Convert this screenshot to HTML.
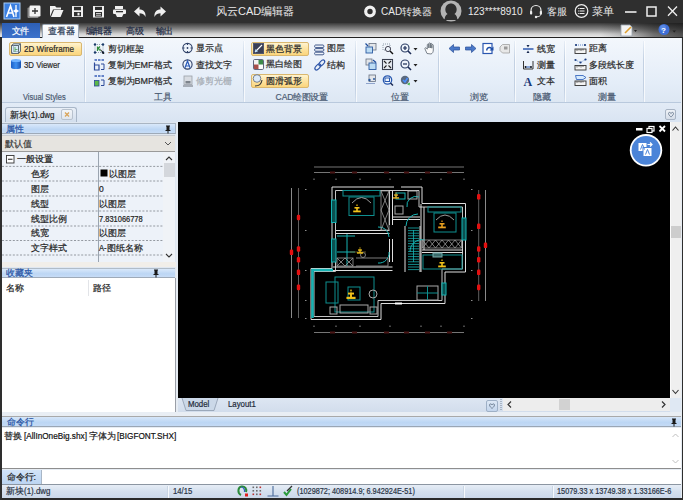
<!DOCTYPE html>
<html><head><meta charset="utf-8">
<style>
*{box-sizing:border-box;margin:0;padding:0}
html,body{width:683px;height:500px;overflow:hidden;background:#2e2e2e;font-family:"Liberation Sans",sans-serif;font-size:11px;color:#222}
.a{position:absolute}
#title{left:0;top:0;width:683px;height:23px;background:#2f2f2f;color:#e6e6e6}
#tabrow{left:0;top:23px;width:683px;height:14px;background:linear-gradient(#3a3a3a,#8a8a8a 45%,#d2d2d2 78%,#e8e8e8)}
#tabline{left:0;top:37px;width:683px;height:1.2px;background:#222}
#ribbon{left:2px;top:38px;width:679px;height:65px;background:linear-gradient(#f3f7fc,#e4edf8 70%,#dde7f3);border-bottom:1px solid #b9c9dd}
#docstrip{left:2px;top:103px;width:679px;height:19px;background:linear-gradient(#e2ebf6,#d3e0f0)}
#leftpanel{left:2px;top:122px;width:174px;height:291px;background:#d8e3f0}
#canvas{left:178px;top:122px;width:492px;height:276px;background:#000}
#vscroll{left:670px;top:122px;width:11px;height:276px;background:#eaeef3}
#hstrip{left:178px;top:398px;width:503px;height:14px;background:linear-gradient(#dde7f3,#cfdcee)}
#cmdhdr{left:2px;top:416px;width:679px;height:11px;background:linear-gradient(#d2e2f6,#b8d1f0)}
#cmdarea{left:2px;top:427px;width:679px;height:42px;background:#fff}
#cmdrow{left:2px;top:469px;width:679px;height:15px;background:#fff;border-top:1px solid #8a8a8a}
#status{left:2px;top:484px;width:679px;height:14px;background:linear-gradient(#e3ecf7,#c9d9ee)}
.c{display:inline-block;width:1em;text-align:center}
.t{white-space:nowrap;-webkit-text-stroke:0.2px currentColor}
.hl{background:linear-gradient(#fff3cf,#fde3a0 50%,#fbd57c);border:1px solid #d9b76f;border-radius:2px}
</style></head><body>
<div id="title" class="a">
<svg class="a" style="left:0;top:0" width="683" height="23" viewBox="0 0 683 23">
 <rect x="4" y="3" width="16" height="16" fill="#3b7fe0" stroke="#a8cdf8" stroke-width="1"/>
 <path d="M6.5 17 L10.5 6 L14 17 M8 13 H13" stroke="#fff" stroke-width="1.6" fill="none"/>
 <path d="M16 5 V17 M13.5 11 H18.5" stroke="#fff" stroke-width="1.3" fill="none"/>
 <circle cx="16" cy="11" r="1.8" fill="#fff"/>
 <rect x="27.5" y="7.5" width="11" height="10.5" rx="1" fill="#8a8a8a"/>
 <rect x="29.5" y="5.5" width="11" height="11" rx="1.2" fill="#f2f2f2"/>
 <path d="M35 8 V14 M32 11 H38" stroke="#333" stroke-width="1.3"/>
 <path d="M50 6 H55 L56.5 7.5 H61 V9.5 H53 L50 16.5 Z" fill="#f0f0f0"/>
 <path d="M51 17 L54 10 H63.5 L60.5 17 Z" fill="#f0f0f0"/>
 <rect x="72" y="6" width="11" height="11" fill="#f0f0f0"/>
 <rect x="74" y="6.8" width="7" height="3.5" fill="#2f2f2f"/>
 <rect x="74" y="12" width="7" height="4.2" fill="#2f2f2f"/>
 <rect x="77.5" y="12.8" width="2" height="2.6" fill="#f0f0f0"/>
 <rect x="93" y="6" width="11" height="11.5" fill="#f0f0f0"/>
 <rect x="95" y="6.8" width="7" height="3.2" fill="#2f2f2f"/>
 <rect x="95" y="12" width="7" height="4.6" fill="#2f2f2f"/>
 <path d="M96 13.5 H101 M96 15.2 H101" stroke="#f0f0f0" stroke-width="0.8"/>
 <rect x="115" y="6" width="8" height="3" fill="#f0f0f0"/>
 <rect x="113" y="9.5" width="13" height="4.5" rx="1" fill="#f0f0f0"/>
 <path d="M115.5 14 H123.5 L122 17 H117 Z" fill="#f0f0f0"/>
 <rect x="116" y="11" width="7" height="1.3" fill="#2f2f2f"/>
 <path d="M134 11.5 L139.5 6.5 V9.5 C143.5 9.5 146 12 145.5 17 C144 14 142 13.3 139.5 13.3 V16.5 Z" fill="#f0f0f0"/>
 <path d="M166 11.5 L160.5 6.5 V9.5 C156.5 9.5 154 12 154.5 17 C156 14 158 13.3 160.5 13.3 V16.5 Z" fill="#f0f0f0"/>
 <circle cx="370" cy="11.5" r="4.3" fill="none" stroke="#f0f0f0" stroke-width="3.2"/>
 <circle cx="451" cy="11" r="10.5" fill="#b4b4b4"/>
 <path d="M444.5 20 C445 16 446 15 447.5 14 C445.5 12.5 445 10 445.5 8 C446.5 4.5 449 3.5 451 3.5 C453 3.5 455.5 4.5 456.5 8 C457 10 456.5 12.5 454.5 14 C456 15 457 16 457.5 20 Z" fill="#2f2f2f"/>
 <path d="M531 13 V10.5 C531 7.5 533.3 5.5 536 5.5 C538.7 5.5 541 7.5 541 10.5 V13" fill="none" stroke="#eee" stroke-width="1.2"/>
 <rect x="530" y="11" width="2.2" height="3.5" rx="0.8" fill="#eee"/>
 <rect x="539.8" y="11" width="2.2" height="3.5" rx="0.8" fill="#eee"/>
 <path d="M541 14 C540.5 16 539 16.8 536.5 16.8" fill="none" stroke="#eee" stroke-width="1"/>
 <circle cx="536" cy="17" r="1.2" fill="#eee"/>
 <circle cx="581.5" cy="11" r="6.3" fill="none" stroke="#eee" stroke-width="1.2"/>
 <path d="M579.5 8.5 H584.5 M579.5 11 H584.5 M579.5 13.5 H584.5" stroke="#eee" stroke-width="1"/>
 <path d="M578 8.5 H578.8 M578 11 H578.8 M578 13.5 H578.8" stroke="#eee" stroke-width="1"/>
 <path d="M625 12 H636.5" stroke="#eee" stroke-width="1.6"/>
 <rect x="647" y="7" width="9" height="9" fill="none" stroke="#eee" stroke-width="1.5"/>
 <path d="M668 6.5 L677 15.8 M677 6.5 L668 15.8" stroke="#eee" stroke-width="1.3"/>
</svg>
<div class="a" style="left:216px;top:4px;font-size:11px;line-height:15px;white-space:nowrap;color:#eaeaea"><span class="c">风</span><span class="c">云</span>CAD<span class="c">编</span><span class="c">辑</span><span class="c">器</span></div>
<div class="a" style="left:381px;top:4px;font-size:10px;line-height:15px;white-space:nowrap;color:#eaeaea">CAD<span class="c">转</span><span class="c">换</span><span class="c">器</span></div>
<div class="a" style="left:468px;top:4px;font-size:10px;line-height:15px;white-space:nowrap;color:#eaeaea">123****8910</div>
<div class="a" style="left:547px;top:4px;font-size:10px;line-height:15px;white-space:nowrap;color:#eaeaea"><span class="c">客</span><span class="c">服</span></div>
<div class="a" style="left:592px;top:4px;font-size:10.5px;line-height:15px;white-space:nowrap;color:#eaeaea"><span class="c">菜</span><span class="c">单</span></div>
</div>
<div id="contentbg" class="a" style="left:2px;top:38px;width:679.5px;height:460px;background:#e6ecf3"></div>
<!--RIBBON-->
<div id="tabrow" class="a"></div>
<div class="a" style="left:600px;top:23px;width:83px;height:14px;background:linear-gradient(to right,rgba(25,25,25,0),rgba(25,25,25,0.25) 40%,rgba(25,25,25,0.55) 65%,rgba(20,20,20,0.7))"></div>
<div id="tabline" class="a"></div>
<div class="a" style="left:2px;top:23px;width:38px;height:15px;background:linear-gradient(#2d5fb5,#3c72cc);"></div>
<div class="a" style="left:42px;top:24px;width:37px;height:15px;background:linear-gradient(#fdfdfd,#eef3fa);border:1px solid #9aa6b4;border-bottom:none;border-radius:2px 2px 0 0"></div>
<div class="a t" style="left:11.5px;top:24.5px;font-size:8.5px;line-height:12px;color:#ffffff;"><span class="c">文</span><span class="c">件</span></div>
<div class="a t" style="left:48px;top:25.0px;font-size:9px;line-height:12px;color:#2a3a55;"><span class="c">查</span><span class="c">看</span><span class="c">器</span></div>
<div class="a t" style="left:85.5px;top:25.0px;font-size:8.5px;line-height:12px;color:#1e2a44;"><span class="c">编</span><span class="c">辑</span><span class="c">器</span></div>
<div class="a t" style="left:126px;top:25.0px;font-size:8.5px;line-height:12px;color:#1e2a44;"><span class="c">高</span><span class="c">级</span></div>
<div class="a t" style="left:155.5px;top:25.0px;font-size:8.5px;line-height:12px;color:#1e2a44;"><span class="c">输</span><span class="c">出</span></div>
<div id="ribbon" class="a">
<div class="a" style="left:81.5px;top:3px;width:1px;height:61px;background:linear-gradient(rgba(190,205,225,0.2),#c3d1e3 30%,#c3d1e3 80%,rgba(190,205,225,0.3))"></div>
<div class="a" style="left:82.5px;top:3px;width:1px;height:61px;background:rgba(255,255,255,0.7)"></div>
<div class="a" style="left:240.5px;top:3px;width:1px;height:61px;background:linear-gradient(rgba(190,205,225,0.2),#c3d1e3 30%,#c3d1e3 80%,rgba(190,205,225,0.3))"></div>
<div class="a" style="left:241.5px;top:3px;width:1px;height:61px;background:rgba(255,255,255,0.7)"></div>
<div class="a" style="left:352.5px;top:3px;width:1px;height:61px;background:linear-gradient(rgba(190,205,225,0.2),#c3d1e3 30%,#c3d1e3 80%,rgba(190,205,225,0.3))"></div>
<div class="a" style="left:353.5px;top:3px;width:1px;height:61px;background:rgba(255,255,255,0.7)"></div>
<div class="a" style="left:436px;top:3px;width:1px;height:61px;background:linear-gradient(rgba(190,205,225,0.2),#c3d1e3 30%,#c3d1e3 80%,rgba(190,205,225,0.3))"></div>
<div class="a" style="left:437px;top:3px;width:1px;height:61px;background:rgba(255,255,255,0.7)"></div>
<div class="a" style="left:511.5px;top:3px;width:1px;height:61px;background:linear-gradient(rgba(190,205,225,0.2),#c3d1e3 30%,#c3d1e3 80%,rgba(190,205,225,0.3))"></div>
<div class="a" style="left:512.5px;top:3px;width:1px;height:61px;background:rgba(255,255,255,0.7)"></div>
<div class="a" style="left:561.5px;top:3px;width:1px;height:61px;background:linear-gradient(rgba(190,205,225,0.2),#c3d1e3 30%,#c3d1e3 80%,rgba(190,205,225,0.3))"></div>
<div class="a" style="left:562.5px;top:3px;width:1px;height:61px;background:rgba(255,255,255,0.7)"></div>
<div class="a" style="left:641px;top:3px;width:1px;height:61px;background:linear-gradient(rgba(190,205,225,0.2),#c3d1e3 30%,#c3d1e3 80%,rgba(190,205,225,0.3))"></div>
<div class="a" style="left:642px;top:3px;width:1px;height:61px;background:rgba(255,255,255,0.7)"></div>
</div>
<div class="a hl" style="left:9px;top:42px;width:73px;height:14px"></div>
<div class="a hl" style="left:251px;top:42px;width:58px;height:13.5px"></div>
<div class="a hl" style="left:251px;top:74px;width:58px;height:13.5px"></div>
<div class="a t" style="left:23.5px;top:42.5px;font-size:9px;line-height:12px;color:#2a2a2a;transform:scaleX(0.9);transform-origin:0 0;">2D Wireframe</div>
<div class="a t" style="left:23.5px;top:58.8px;font-size:9px;line-height:12px;color:#2a2a2a;transform:scaleX(0.87);transform-origin:0 0;">3D Viewer</div>
<div class="a t" style="left:23px;top:90.7px;font-size:8.5px;line-height:12px;color:#4b5b73;transform:scaleX(0.88);transform-origin:0 0;">Visual Styles</div>
<div class="a t" style="left:107.5px;top:42.5px;font-size:9px;line-height:12px;color:#2a2a2a;"><span class="c">剪</span><span class="c">切</span><span class="c">框</span><span class="c">架</span></div>
<div class="a t" style="left:107.5px;top:58.8px;font-size:9px;line-height:12px;color:#2a2a2a;"><span class="c">复</span><span class="c">制</span><span class="c">为</span>EMF<span class="c">格</span><span class="c">式</span></div>
<div class="a t" style="left:107.5px;top:74.5px;font-size:9px;line-height:12px;color:#2a2a2a;"><span class="c">复</span><span class="c">制</span><span class="c">为</span>BMP<span class="c">格</span><span class="c">式</span></div>
<div class="a t" style="left:195.5px;top:42.0px;font-size:9px;line-height:12px;color:#2a2a2a;"><span class="c">显</span><span class="c">示</span><span class="c">点</span></div>
<div class="a t" style="left:195.5px;top:58.5px;font-size:9px;line-height:12px;color:#2a2a2a;"><span class="c">查</span><span class="c">找</span><span class="c">文</span><span class="c">字</span></div>
<div class="a t" style="left:195.5px;top:75.0px;font-size:9px;line-height:12px;color:#a8aeb6;"><span class="c">修</span><span class="c">剪</span><span class="c">光</span><span class="c">栅</span></div>
<div class="a t" style="left:154px;top:90.7px;font-size:9px;line-height:12px;color:#4b5b73;"><span class="c">工</span><span class="c">具</span></div>
<div class="a t" style="left:265.5px;top:42.5px;font-size:9px;line-height:12px;color:#2a2a2a;"><span class="c">黑</span><span class="c">色</span><span class="c">背</span><span class="c">景</span></div>
<div class="a t" style="left:265.5px;top:58.3px;font-size:9px;line-height:12px;color:#2a2a2a;"><span class="c">黑</span><span class="c">白</span><span class="c">绘</span><span class="c">图</span></div>
<div class="a t" style="left:265.5px;top:75.0px;font-size:9px;line-height:12px;color:#2a2a2a;"><span class="c">圆</span><span class="c">滑</span><span class="c">弧</span><span class="c">形</span></div>
<div class="a t" style="left:327px;top:42.0px;font-size:9px;line-height:12px;color:#2a2a2a;"><span class="c">图</span><span class="c">层</span></div>
<div class="a t" style="left:327px;top:58.5px;font-size:9px;line-height:12px;color:#2a2a2a;"><span class="c">结</span><span class="c">构</span></div>
<div class="a t" style="left:275.5px;top:91.0px;font-size:8.5px;line-height:12px;color:#4b5b73;">CAD<span class="c">绘</span><span class="c">图</span><span class="c">设</span><span class="c">置</span></div>
<div class="a t" style="left:391px;top:90.5px;font-size:9px;line-height:12px;color:#4b5b73;"><span class="c">位</span><span class="c">置</span></div>
<div class="a t" style="left:469.5px;top:90.5px;font-size:9px;line-height:12px;color:#4b5b73;"><span class="c">浏</span><span class="c">览</span></div>
<div class="a t" style="left:536.5px;top:42.6px;font-size:9px;line-height:12px;color:#2a2a2a;"><span class="c">线</span><span class="c">宽</span></div>
<div class="a t" style="left:536.5px;top:59.0px;font-size:9px;line-height:12px;color:#2a2a2a;"><span class="c">测</span><span class="c">量</span></div>
<div class="a t" style="left:536.5px;top:75.0px;font-size:9px;line-height:12px;color:#2a2a2a;"><span class="c">文</span><span class="c">本</span></div>
<div class="a t" style="left:533px;top:90.5px;font-size:9px;line-height:12px;color:#4b5b73;"><span class="c">隐</span><span class="c">藏</span></div>
<div class="a t" style="left:588.5px;top:42.0px;font-size:9px;line-height:12px;color:#2a2a2a;"><span class="c">距</span><span class="c">离</span></div>
<div class="a t" style="left:588.5px;top:59.2px;font-size:9px;line-height:12px;color:#2a2a2a;"><span class="c">多</span><span class="c">段</span><span class="c">线</span><span class="c">长</span><span class="c">度</span></div>
<div class="a t" style="left:588.5px;top:74.5px;font-size:9px;line-height:12px;color:#2a2a2a;"><span class="c">面</span><span class="c">积</span></div>
<div class="a t" style="left:597.5px;top:90.5px;font-size:9px;line-height:12px;color:#4b5b73;"><span class="c">测</span><span class="c">量</span></div>
<!--/RIBBON-->
<!--RIBICONS-->
<svg class="a" style="left:0;top:0" width="683" height="104" viewBox="0 0 683 104">
<defs>
<linearGradient id="cyl" x1="0" x2="1"><stop offset="0" stop-color="#1a5fc8"/><stop offset="0.5" stop-color="#3d8ff0"/><stop offset="1" stop-color="#1650b0"/></linearGradient>
</defs>
<!-- wireframe cube -->
<path d="M11.5 45.5 L13.5 43.8 H20.5 V51.5 L18.5 53.5 H11.5 Z" fill="#d6ecf8"/>
<path d="M11.5 45.5 H18.5 V53.5 H11.5 Z M11.5 45.5 L13.5 43.8 H20.5 L18.5 45.5 M20.5 43.8 V51.5 L18.5 53.5" fill="none" stroke="#505a66" stroke-width="0.9"/>
<path d="M13.5 43.8 V51.5 H20.5 M13.5 51.5 L11.5 53.5" fill="none" stroke="#8a96a4" stroke-width="0.6"/>
<path d="M15 47 V52 M15 49.5 H17.5" stroke="#5aa860" stroke-width="0.9"/>
<!-- cylinder -->
<path d="M11 60.5 V67.5 C11 69.5 21 69.5 21 67.5 V60.5 Z" fill="url(#cyl)"/>
<ellipse cx="16" cy="60.5" rx="5" ry="1.6" fill="#6fb2ff"/>
<!-- 剪切框架 -->
<rect x="95" y="44.5" width="8" height="8" fill="none" stroke="#7a8fa0" stroke-width="0.8" stroke-dasharray="1 1"/>
<circle cx="95" cy="44.5" r="1.2" fill="#1a3a6a"/><circle cx="103" cy="44.5" r="1.2" fill="#1a3a6a"/>
<circle cx="95" cy="52.5" r="1.2" fill="#1a3a6a"/><circle cx="103" cy="52.5" r="1.2" fill="#1a3a6a"/>
<path d="M97.5 46.5 V51 M97.5 49 L100 46.5 M98.5 48.5 L100.5 51" stroke="#2e8a3a" stroke-width="1.2"/>
<path d="M99.5 48 L104.5 53.5 L103 54 Z" fill="#111"/>
<!-- EMF -->
<path d="M94.5 60 H97 M98 60 H100.5 M101.5 60 H104" stroke="#3a5fb8" stroke-width="1.6"/>
<path d="M94.5 62.5 V70 H99 V65 H94.5" fill="none" stroke="#2c4a9a" stroke-width="1.2"/>
<path d="M101 64 H104 V69.5 H101" fill="none" stroke="#2c4a9a" stroke-width="1"/>
<!-- BMP -->
<path d="M94.5 76 H97 M98 76 H100.5 M101.5 76 H104" stroke="#3a5fb8" stroke-width="1.6"/>
<rect x="94.5" y="80.5" width="4.5" height="5.5" fill="#5cb848" stroke="#2c4a9a" stroke-width="0.8"/>
<path d="M101 80 H104 V85.5 H101" fill="none" stroke="#2c4a9a" stroke-width="1"/>
<!-- 显示点 -->
<circle cx="187.5" cy="48" r="4.6" fill="#eef4fb" stroke="#2d3f66" stroke-width="1.1"/>
<path d="M187.5 43 V45 M187.5 51 V53 M182.5 48 H184.5 M190.5 48 H192.5" stroke="#2d3f66" stroke-width="1"/>
<circle cx="187.5" cy="48" r="0.9" fill="#2d3f66"/>
<!-- 查找文字 -->
<circle cx="187.5" cy="64.5" r="4.6" fill="#eef4fb" stroke="#2d3f66" stroke-width="1.1"/>
<path d="M185 67.8 L187.5 61 L190 67.8 M186 66 H189" stroke="#2a5bb8" stroke-width="1.2" fill="none"/>
<!-- 修剪光栅 -->
<rect x="184" y="76" width="8" height="8.5" fill="#d8dce2" stroke="#9aa0a8" stroke-width="0.8"/>
<rect x="185.5" y="81" width="5" height="2.5" fill="#7d848c"/>
<path d="M183 86 H193" stroke="#6a7078" stroke-width="1"/>
<!-- 黑色背景 -->
<rect x="253.5" y="43.5" width="10" height="10" fill="#3a3f55" stroke="#50566e" stroke-width="1"/>
<path d="M255 52 L262 45" stroke="#fff" stroke-width="1.1"/>
<path d="M255 52 L258 51.5 L255.5 49 Z" fill="#bfe3ff"/>
<!-- 黑白绘图 -->
<rect x="253.5" y="59.5" width="10" height="10" rx="1.2" fill="#fff" stroke="#50566e" stroke-width="0.9"/>
<rect x="254" y="60" width="4.5" height="4.5" fill="#f3f3f3"/>
<rect x="258.5" y="60" width="4.5" height="4.5" fill="#3d8a4a"/>
<rect x="254" y="64.5" width="4.5" height="4.5" fill="#a8504a"/>
<!-- 圆滑弧形 -->
<circle cx="257" cy="78.5" r="3.8" fill="#dbe9f8" stroke="#6a7486" stroke-width="0.9"/>
<path d="M262 80 C261.5 84 259 86 255 86" stroke="#3a3a3a" stroke-width="1.1" fill="none"/>
<!-- 图层 -->
<path d="M315.5 45 H323 C324.2 45 324.2 47.6 323 47.6 H315.5 C314.3 47.6 314.3 45 315.5 45 Z" fill="#eef3fa" stroke="#304a80" stroke-width="0.9"/>
<path d="M315.5 48.6 H323 C324.2 48.6 324.2 51.2 323 51.2 H315.5 C314.3 51.2 314.3 48.6 315.5 48.6 Z" fill="#eef3fa" stroke="#304a80" stroke-width="0.9"/>
<path d="M315.5 52.2 H323 C324.2 52.2 324.2 54.8 323 54.8 H315.5 C314.3 54.8 314.3 52.2 315.5 52.2 Z" fill="#eef3fa" stroke="#304a80" stroke-width="0.9"/>
<!-- 结构 -->
<ellipse cx="317.8" cy="67" rx="3.6" ry="1.9" transform="rotate(-45 317.8 67)" fill="none" stroke="#2f56a8" stroke-width="1.2"/>
<ellipse cx="321.8" cy="63" rx="3.6" ry="1.9" transform="rotate(-45 321.8 63)" fill="none" stroke="#2f56a8" stroke-width="1.2"/>
<!-- 位置 -->
<rect x="369" y="43.5" width="7" height="6.5" fill="#e3e6ea" stroke="#667080" stroke-width="0.8"/>
<rect x="366" y="47" width="6.5" height="6" fill="#bcdcf4" stroke="#2a5aa0" stroke-width="0.9"/>
<path d="M365.5 43.5 L368 46" stroke="#1a4a9a" stroke-width="1.2"/>
<rect x="383" y="44" width="7" height="6" fill="none" stroke="#7a8898" stroke-width="0.8" stroke-dasharray="1 1"/>
<circle cx="388" cy="49" r="2.6" fill="#eef4fb" stroke="#334" stroke-width="0.9"/>
<path d="M390 51 L393 54" stroke="#111" stroke-width="1.4"/>
<circle cx="405" cy="48" r="4" fill="#eef4fb" stroke="#2d3f66" stroke-width="1.2"/>
<path d="M403 48 H407 M405 46 V50" stroke="#1a2a55" stroke-width="1.2"/>
<path d="M408 51 L411 54" stroke="#1a2a55" stroke-width="1.6"/>
<path d="M413.5 48 H417.5 L415.5 50.5 Z" fill="#222"/>
<path d="M427 53.5 L425 49 C424.5 48 425.5 47.3 426.3 48 L427.3 49.2 V44.8 C427.3 43.8 428.8 43.8 428.8 44.8 V48 V43.6 C428.8 42.6 430.3 42.6 430.3 43.6 V48 V44 C430.3 43 431.8 43 431.8 44 V48.2 V45.2 C431.8 44.3 433.3 44.3 433.3 45.2 V50 C433.3 52 432.5 53.5 431 54 Z" fill="#fbfbfb" stroke="#5a6470" stroke-width="0.8" stroke-linejoin="round"/>
<rect x="366" y="59" width="6" height="6" fill="#e3e6ea" stroke="#667080" stroke-width="0.8"/>
<rect x="369" y="63" width="7" height="6.5" fill="#bcdcf4" stroke="#2a5aa0" stroke-width="0.9"/>
<path d="M373 60 L376 62.5" stroke="#1a4a9a" stroke-width="1.2"/>
<rect x="382.5" y="59.5" width="10" height="10" fill="#e8edf3" stroke="#3a4050" stroke-width="1.1"/>
<path d="M384 61 L386.5 63.5 M391 61 L388.5 63.5 M384 68 L386.5 65.5 M391 68 L388.5 65.5" stroke="#222" stroke-width="1.1"/>
<circle cx="405" cy="64" r="4" fill="#eef4fb" stroke="#2d3f66" stroke-width="1.2"/>
<path d="M403 64 H407" stroke="#1a2a55" stroke-width="1.2"/>
<path d="M408 67 L411 70" stroke="#1a2a55" stroke-width="1.6"/>
<path d="M413.5 64 H417.5 L415.5 66.5 Z" fill="#222"/>
<rect x="369" y="75" width="6.5" height="6.5" fill="#e3e6ea" stroke="#667080" stroke-width="0.8"/>
<circle cx="369.5" cy="80" r="1.2" fill="#2a5aa0"/><circle cx="374" cy="79" r="1" fill="#2a5aa0"/>
<path d="M366.5 83.5 H375" stroke="#3a5aa0" stroke-width="1" stroke-dasharray="1 1"/>
<circle cx="387.5" cy="80" r="4.2" fill="#eef4fb" stroke="#2a5ab0" stroke-width="1.3"/>
<rect x="385" y="78" width="4.5" height="3.5" fill="none" stroke="#2a5ab0" stroke-width="1"/>
<path d="M390.5 83 L393 85.5" stroke="#1a2a55" stroke-width="1.5"/>
<circle cx="405" cy="80" r="4.2" fill="#5a6a80"/>
<path d="M403 80 L405 82 L407.5 78" stroke="#4a90ff" stroke-width="1.5" fill="none"/>
<path d="M407 84 L410 82.5 L409.5 85.5 Z" fill="#3ab040"/>
<path d="M413.5 80 H417.5 L415.5 82.5 Z" fill="#222"/>
<!-- 浏览 -->
<path d="M449 48.5 L453.5 44.5 V47 H459.5 V50 H453.5 V52.5 Z" fill="#4a78c8" stroke="#2a4f98" stroke-width="0.7"/>
<path d="M476 48.5 L471.5 44.5 V47 H465.5 V50 H471.5 V52.5 Z" fill="#4a78c8" stroke="#2a4f98" stroke-width="0.7"/>
<rect x="483" y="43.5" width="9" height="10" fill="#fff" stroke="#2a56b0" stroke-width="1.2"/>
<path d="M486 50.5 C486 46.5 490 45.5 492 48 L493.5 46.5 V50.5 H489.5 L491 49 C489.5 47.5 487.5 48.5 487.5 50.5 Z" fill="#1f4fa8"/>
<path d="M500 47 L502.5 44.5 H509.5 V53 H502.5 L500 50.5 Z" fill="#e8e8e8" stroke="#a8a8a8" stroke-width="0.9"/>
<rect x="504" y="46.5" width="3.5" height="3" fill="#9a9a9a"/>
<!-- 隐藏 -->
<path d="M523 49 H533.5" stroke="#2f5ab0" stroke-width="1.5"/>
<path d="M526.5 45 H529.5 L528 47.5 Z M526.5 53 H529.5 L528 50.5 Z" fill="#1a2a50"/>
<path d="M523.5 61 V69 H533 V61" fill="none" stroke="#333" stroke-width="1"/>
<path d="M525 67 H531.5" stroke="#2a5ab0" stroke-width="1"/>
<circle cx="525.5" cy="67" r="0.9" fill="#111"/><circle cx="531" cy="67" r="0.9" fill="#111"/>
<text x="523.5" y="85.5" font-family="Liberation Serif" font-weight="bold" font-size="12" fill="#1c3a78">A</text>
<!-- 测量 -->
<path d="M576 45 H585" stroke="#3a6ac0" stroke-width="0.8" stroke-dasharray="1 1"/>
<circle cx="576" cy="45" r="1.1" fill="#1a3a7a"/><circle cx="585" cy="45" r="1.1" fill="#1a3a7a"/>
<rect x="575" y="49" width="11" height="4.5" fill="#f4f4f4" stroke="#333" stroke-width="0.9"/>
<path d="M577 49 V51 M579 49 V50.5 M581 49 V51 M583 49 V50.5" stroke="#333" stroke-width="0.7"/>
<circle cx="575.5" cy="60" r="1.1" fill="#1a3a7a"/><circle cx="580.5" cy="62.5" r="1.1" fill="#1a3a7a"/><circle cx="585.5" cy="59.5" r="1.1" fill="#1a3a7a"/>
<path d="M575.5 60 L580.5 62.5 L585.5 59.5" stroke="#3a6ac0" stroke-width="0.7" stroke-dasharray="1 1" fill="none"/>
<rect x="575" y="65.5" width="11" height="4.5" fill="#f4f4f4" stroke="#333" stroke-width="0.9"/>
<path d="M577 65.5 V67.5 M579 65.5 V67 M581 65.5 V67.5 M583 65.5 V67" stroke="#333" stroke-width="0.7"/>
<path d="M575.5 75.5 H583 L586 77.5 L583 79.5 H576.5 Z" fill="#d6eafc" stroke="#3a6ac0" stroke-width="0.9"/>
<rect x="575" y="81" width="11" height="4.5" fill="#f4f4f4" stroke="#333" stroke-width="0.9"/>
<path d="M577 81 V83 M579 81 V82.5 M581 81 V83 M583 81 V82.5" stroke="#333" stroke-width="0.7"/>
<!-- top right icons in tab row -->
<path d="M621 25 H630 L632 27 V36 H621 Z" fill="#f4f4f4" stroke="#9aa4b0" stroke-width="0.8"/>
<path d="M625 33 L631 27" stroke="#e0a030" stroke-width="1.6"/>
<path d="M634 30 H637 L635.5 32 Z" fill="#222"/>
<circle cx="664" cy="29.5" r="5.5" fill="#3f6fd6"/>
<circle cx="663" cy="28" r="3" fill="#6d9bf0" opacity="0.6"/>
<text x="661" y="33" font-family="Liberation Sans" font-weight="bold" font-size="8" fill="#fff">?</text>
<path d="M672.5 30.5 H676 L674.25 32.5 Z" fill="#222"/>
</svg>

<!--/RIBICONS-->
<!--LEFT-->
<div class="a" style="left:2px;top:103px;width:679px;height:19px;background:linear-gradient(#e2ebf6,#d9e4f2)"></div>
<div class="a" style="left:4.5px;top:107px;width:72px;height:15px;background:linear-gradient(#e9eff7,#d2deed);border:1px solid #a9b7c8;border-bottom:none;border-radius:3px 3px 0 0"></div>
<div class="a" style="left:61px;top:109px;width:11.5px;height:11px;background:linear-gradient(#f2f5f9,#dfe6ee);border:1px solid #b8c2ce;border-radius:2px"></div>
<svg class="a" style="left:61px;top:109px" width="12" height="11"><path d="M4 3.5 L8 7.5 M8 3.5 L4 7.5" stroke="#d9a45a" stroke-width="1.3"/></svg>
<div class="a t" style="left:9.5px;top:109.0px;font-size:9px;line-height:12px;color:#222;"><span class="c">新</span><span class="c">块</span></div>
<div class="a t" style="left:27.5px;top:109.0px;font-size:9px;line-height:12px;color:#222;transform:scaleX(0.88);transform-origin:0 0;">(1).dwg</div>
<div class="a" style="left:664.5px;top:108.5px;width:11.5px;height:11.5px;background:linear-gradient(#eef2f7,#d5dde8);border:1px solid #a8b4c4;border-radius:2px"></div>
<svg class="a" style="left:664.5px;top:108.5px" width="12" height="12"><path d="M3.5 4.5 C3.5 3 5.5 3 6 4.5 C6.5 3 8.5 3 8.5 4.5 C8.5 6 6 8 6 8 C6 8 3.5 6 3.5 4.5 Z" fill="none" stroke="#6a7a90" stroke-width="0.9"/></svg>
<div class="a" style="left:2px;top:122px;width:174px;height:291px;background:#dfe7f1"></div>
<div class="a" style="left:2px;top:122.8px;width:173.5px;height:11px;background:linear-gradient(#d9e8fa,#bcd6f4 60%,#c7dcf6);border:1px solid #a9b5c3;border-left:none;border-bottom-color:#9eaab8"></div>
<div class="a t" style="left:6px;top:122.5px;font-size:9px;line-height:12px;color:#1f4fa0;"><span class="c">属</span><span class="c">性</span></div>
<svg class="a" style="left:162.5px;top:123.5px" width="10" height="10"><path d="M3 1.5 H7 V2.5 H6.5 V6 H7.5 V7 H2.5 V6 H3.5 V2.5 H3 Z" fill="#1a1a1a"/><path d="M5 7 V9.5" stroke="#1a1a1a" stroke-width="1"/></svg>
<div class="a" style="left:2px;top:135px;width:173px;height:16.5px;background:#e6e4e0;border-bottom:1.5px solid #9a9a9a;border-top:1px solid #c8ccd2"></div>
<div class="a t" style="left:5px;top:137.5px;font-size:9px;line-height:12px;color:#333;"><span class="c">默</span><span class="c">认</span><span class="c">值</span></div>
<svg class="a" style="left:163px;top:139px" width="10" height="9"><path d="M2 3 L5 6 L8 3" stroke="#555" stroke-width="1" fill="none"/></svg>
<div class="a" style="left:2px;top:152px;width:173px;height:110px;background:#edf2f9"></div>
<div class="a" style="left:97.5px;top:152px;width:1px;height:110px;background:#9aa4b0"></div>
<div class="a" style="left:163px;top:152px;width:12px;height:110px;background:#f0f3f7"></div>
<div class="a" style="left:163.5px;top:163px;width:11px;height:13.5px;background:#d4d7dc"></div>
<svg class="a" style="left:163px;top:153px" width="12" height="110"><path d="M3 7 L6 4 L9 7" stroke="#333" stroke-width="1.1" fill="none"/><path d="M3 101 L6 104 L9 101" stroke="#333" stroke-width="1.1" fill="none"/></svg>
<svg class="a" style="left:2px;top:152px" width="161" height="110">
<path d="M0 14.400000000000006 H161" stroke="#8a8f96" stroke-width="0.9" stroke-dasharray="2 1.6"/>
<path d="M0 29 H161" stroke="#8a8f96" stroke-width="0.9" stroke-dasharray="2 1.6"/>
<path d="M0 44 H161" stroke="#8a8f96" stroke-width="0.9" stroke-dasharray="2 1.6"/>
<path d="M0 59 H161" stroke="#8a8f96" stroke-width="0.9" stroke-dasharray="2 1.6"/>
<path d="M0 74 H161" stroke="#8a8f96" stroke-width="0.9" stroke-dasharray="2 1.6"/>
<path d="M0 88.5 H161" stroke="#8a8f96" stroke-width="0.9" stroke-dasharray="2 1.6"/>
<path d="M0 103 H161" stroke="#8a8f96" stroke-width="0.9" stroke-dasharray="2 1.6"/>
<rect x="4.5" y="3.5" width="7.5" height="7.5" fill="#fff" stroke="#333" stroke-width="0.9"/><path d="M6 7.25 H10.5" stroke="#222" stroke-width="1"/>
<rect x="98.5" y="17.5" width="7" height="7" fill="#000"/>
</svg>
<div class="a t" style="left:16.5px;top:153.0px;font-size:9px;line-height:12px;color:#222;"><span class="c">一</span><span class="c">般</span><span class="c">设</span><span class="c">置</span></div>
<div class="a t" style="left:30.5px;top:167.7px;font-size:9px;line-height:12px;color:#222;"><span class="c">色</span><span class="c">彩</span></div>
<div class="a t" style="left:30.5px;top:182.5px;font-size:9px;line-height:12px;color:#222;"><span class="c">图</span><span class="c">层</span></div>
<div class="a t" style="left:30.5px;top:197.5px;font-size:9px;line-height:12px;color:#222;"><span class="c">线</span><span class="c">型</span></div>
<div class="a t" style="left:30.5px;top:212.5px;font-size:9px;line-height:12px;color:#222;"><span class="c">线</span><span class="c">型</span><span class="c">比</span><span class="c">例</span></div>
<div class="a t" style="left:30.5px;top:227.3px;font-size:9px;line-height:12px;color:#222;"><span class="c">线</span><span class="c">宽</span></div>
<div class="a t" style="left:30.5px;top:241.8px;font-size:9px;line-height:12px;color:#222;"><span class="c">文</span><span class="c">字</span><span class="c">样</span><span class="c">式</span></div>
<div class="a t" style="left:109px;top:167.7px;font-size:9px;line-height:12px;color:#222;"><span class="c">以</span><span class="c">图</span><span class="c">层</span></div>
<div class="a t" style="left:99px;top:182.5px;font-size:8.5px;line-height:12px;color:#222;">0</div>
<div class="a t" style="left:99px;top:197.5px;font-size:9px;line-height:12px;color:#222;"><span class="c">以</span><span class="c">图</span><span class="c">层</span></div>
<div class="a t" style="left:99px;top:212.5px;font-size:8.5px;line-height:12px;color:#222;transform:scaleX(0.88);transform-origin:0 0;">7.831066778</div>
<div class="a t" style="left:99px;top:227.3px;font-size:9px;line-height:12px;color:#222;"><span class="c">以</span><span class="c">图</span><span class="c">层</span></div>
<div class="a t" style="left:99px;top:241.8px;font-size:8.5px;line-height:12px;color:#222;transform:scaleX(0.9);transform-origin:0 0;">A-</div>
<div class="a t" style="left:107px;top:241.8px;font-size:9px;line-height:12px;color:#222;"><span class="c">图</span><span class="c">纸</span><span class="c">名</span><span class="c">称</span></div>
<div class="a" style="left:2px;top:262px;width:174px;height:5px;background:#f1eee9"></div>
<div class="a" style="left:2px;top:267.5px;width:173px;height:10.5px;background:linear-gradient(#d9e8fa,#bcd6f4 60%,#c7dcf6);border-bottom:1px solid #9eaab8;border-top:1px solid #b0bcc8"></div>
<div class="a t" style="left:6px;top:266.8px;font-size:9px;line-height:12px;color:#1f4fa0;"><span class="c">收</span><span class="c">藏</span><span class="c">夹</span></div>
<svg class="a" style="left:150.5px;top:267.5px" width="10" height="10"><path d="M3 1.5 H7 V2.5 H6.5 V6 H7.5 V7 H2.5 V6 H3.5 V2.5 H3 Z" fill="#1a1a1a"/><path d="M5 7 V9.5" stroke="#1a1a1a" stroke-width="1"/></svg>
<div class="a" style="left:2px;top:278px;width:174px;height:135px;background:#fff;border-right:1px solid #9a9ea6;border-bottom:1px solid #8e9298"></div>
<div class="a" style="left:88px;top:280px;width:1px;height:16px;background:#e2e4e8"></div>
<div class="a t" style="left:6px;top:282.0px;font-size:9px;line-height:12px;color:#222;"><span class="c">名</span><span class="c">称</span></div>
<div class="a t" style="left:92.5px;top:282.0px;font-size:9px;line-height:12px;color:#222;"><span class="c">路</span><span class="c">径</span></div>
<!--/LEFT-->
<!--CANVAS-->
<div class="a" style="left:177.5px;top:121.7px;width:492.5px;height:276px;background:#000"></div>
<svg class="a" style="left:0;top:0" width="683" height="500" viewBox="0 0 683 500">
<g stroke="#8c8c8c" stroke-width="0.9" fill="none">
<path d="M314 167 H464 M314 172.5 H464 M314 332.5 H464" stroke="#a8a8a8" stroke-width="0.7"/>
<path d="M291.5 188 V318 M485.5 190 V301" stroke="#9a9a9a"/><path d="M298.5 188 V318 M478.7 190 V301" stroke="#6a6a6a"/>
</g>
<g fill="#8c8c8c">
<rect x="313.5" y="178.5" width="1" height="1.5"/>
<rect x="313.5" y="325.5" width="1" height="1.5"/>
<rect x="335.5" y="178.5" width="1" height="1.5"/>
<rect x="335.5" y="325.5" width="1" height="1.5"/>
<rect x="359.5" y="178.5" width="1" height="1.5"/>
<rect x="359.5" y="325.5" width="1" height="1.5"/>
<rect x="389.5" y="178.5" width="1" height="1.5"/>
<rect x="389.5" y="325.5" width="1" height="1.5"/>
<rect x="420.5" y="178.5" width="1" height="1.5"/>
<rect x="420.5" y="325.5" width="1" height="1.5"/>
<rect x="440.5" y="178.5" width="1" height="1.5"/>
<rect x="440.5" y="325.5" width="1" height="1.5"/>
<rect x="463.5" y="178.5" width="1" height="1.5"/>
<rect x="463.5" y="325.5" width="1" height="1.5"/>
<rect x="305" y="189" width="1.5" height="1"/>
<rect x="471" y="189" width="1.5" height="1"/>
<rect x="305" y="230" width="1.5" height="1"/>
<rect x="471" y="230" width="1.5" height="1"/>
<rect x="305" y="270" width="1.5" height="1"/>
<rect x="471" y="270" width="1.5" height="1"/>
<rect x="305" y="300" width="1.5" height="1"/>
<rect x="471" y="300" width="1.5" height="1"/>
<rect x="305" y="318" width="1.5" height="1"/>
<rect x="471" y="318" width="1.5" height="1"/>
</g>
<g fill="#4a1616">
<rect x="330" y="171.5" width="5" height="2"/>
<rect x="330" y="331.5" width="5" height="2"/>
<rect x="352" y="171.5" width="5" height="2"/>
<rect x="352" y="331.5" width="5" height="2"/>
<rect x="384" y="171.5" width="5" height="2"/>
<rect x="384" y="331.5" width="5" height="2"/>
<rect x="404" y="171.5" width="5" height="2"/>
<rect x="404" y="331.5" width="5" height="2"/>
<rect x="425" y="171.5" width="5" height="2"/>
<rect x="425" y="331.5" width="5" height="2"/>
<rect x="447" y="171.5" width="5" height="2"/>
<rect x="447" y="331.5" width="5" height="2"/>
</g>
<g fill="#e41010">
<rect x="296.8" y="214.7" width="3.4" height="5.6" rx="1.2"/>
<rect x="296.8" y="246.2" width="3.4" height="5.6" rx="1.2"/>
<rect x="296.8" y="256.9" width="3.4" height="5.6" rx="1.2"/>
<rect x="296.8" y="269.5" width="3.4" height="5.6" rx="1.2"/>
<rect x="296.8" y="284.59999999999997" width="3.4" height="5.6" rx="1.2"/>
<rect x="477" y="194.0" width="3.4" height="5.6" rx="1.2"/>
<rect x="477" y="223.5" width="3.4" height="5.6" rx="1.2"/>
<rect x="477" y="246.2" width="3.4" height="5.6" rx="1.2"/>
<rect x="477" y="256.9" width="3.4" height="5.6" rx="1.2"/>
<rect x="477" y="269.5" width="3.4" height="5.6" rx="1.2"/>
<rect x="477" y="284.59999999999997" width="3.4" height="5.6" rx="1.2"/>
<rect x="289.8" y="249.5" width="3.4" height="5.6" rx="1.2"/><rect x="483.8" y="242.5" width="3.4" height="5.6" rx="1.2"/>
</g>
<g fill="none" stroke="#dedede" stroke-width="1">
<path d="M332 187 H394 M401 187 H422 V203.5 H465.5 V272 H445 V303.5 H402 M395 303.5 H381 V319.5 H311 V268.5 H332 V187"/>
<path d="M335.5 190.5 H419 V207 H462.5 V269 H442 V300.5 H378 V316.5 H314 V271.5 H335.5 Z" stroke="#c4c4c4"/>
<path d="M336 230.5 H389.5 M336 233.5 H389.5 M333 267 H392.5 M333 270.5 H392.5"/>
<path d="M389.5 190.5 V225 M392.5 190.5 V225 M389.5 239 V262 M392.5 239 V262"/>
<path d="M393 217 H420 M393 219.5 H420"/>
<path d="M421 204 V272 M424 207 V250"/>
<path d="M422 250 H463 M422 252.5 H463"/>
<path d="M405 226 V272 M420 226 V272"/>
<path d="M395 303.5 H402" stroke="#fff" stroke-width="2"/>
</g>
<g fill="none" stroke="#16b3b3" stroke-width="1">
<rect x="331.5" y="200" width="4.5" height="22.5" fill="#0a5050"/>
<rect x="331.5" y="239" width="4.5" height="23" fill="#0a5050"/>
<rect x="462" y="218" width="4" height="22" fill="#0a5050"/>
<rect x="442" y="283" width="4" height="12" fill="#0a5050"/>
<path d="M312.5 318 V270 H333" stroke-width="2.5"/>
<rect x="349" y="197" width="25" height="18.5" stroke="#0e8f8f"/>
<rect x="343" y="190.5" width="37" height="5.5" stroke="#0e8f8f"/>
<path d="M352 203 Q361.5 192 371 203" stroke="#9a9a9a"/>
<rect x="434" y="213" width="22" height="19" stroke="#0e8f8f"/>
<rect x="428" y="207" width="33" height="5" stroke="#0e8f8f"/>
<path d="M436 220 Q445 210 454 220" stroke="#9a9a9a"/>
<rect x="335" y="277" width="39" height="35" stroke="#0e8f8f"/>
<rect x="326" y="282" width="12" height="21" stroke="#0e8f8f"/>
<rect x="348" y="287" width="12" height="13" stroke="#0e8f8f"/>
<rect x="340" y="305" width="28" height="8" stroke="#a8a8a8"/>
<rect x="330" y="307" width="7" height="7" stroke="#a8a8a8"/><rect x="370" y="307" width="7" height="7" stroke="#a8a8a8"/>
<circle cx="373" cy="294" r="4" stroke="#a8a8a8"/>
<rect x="417" y="286" width="21" height="14" stroke="#a8a8a8"/>
<path d="M427.5 286 V300 M417 293 H438" stroke="#0e8f8f"/>
<rect x="423" y="255" width="39" height="14" stroke="#0e8f8f"/>
<rect x="433" y="253" width="9" height="4" fill="#3a6a6a" stroke="#7aa"/>
<path d="M337 236 H355 M337 252 H355 M347 234 V266" stroke="#16b3b3"/>
<path d="M378 227 A10 10 0 0 1 389 237" /><path d="M378 263 A10 10 0 0 0 389 252"/>
<path d="M406 226 A12 12 0 0 1 418 214"/><path d="M407 207 A9 9 0 0 1 419 197"/>
<path d="M425 240 A12 12 0 0 0 410 252"/>
<rect x="396" y="193" width="9" height="6"/><rect x="408" y="191" width="9" height="8" stroke="#aaa"/>
<rect x="395" y="206" width="8" height="8" stroke="#aaa"/>
</g>
<g fill="none" stroke="#9a9a9a" stroke-width="0.8">
<rect x="381" y="191" width="8" height="39"/><path d="M381 191 L389 210 L381 230 M389 191 L381 210 L389 230"/>
<rect x="422.5" y="240" width="39" height="8"/><path d="M422.5 240 L429 248 L435.5 240 L442 248 L448.5 240 L455 248 L461.5 240 M422.5 248 L429 240 L435.5 248 L442 240 L448.5 248 L455 240 L461.5 248"/>
<rect x="337" y="258" width="16" height="8"/><path d="M337 258 L345 266 M345 258 L337 266 M345 258 L353 266 M353 258 L345 266"/>
<path d="M356 258 H388 V266 H356"/>
<circle cx="363" cy="255" r="2.5"/>
</g>
<g stroke="#16b3b3" stroke-width="0.8">
<path d="M408 228.0 H419"/>
<path d="M408 230.6 H419"/>
<path d="M408 233.2 H419"/>
<path d="M408 235.8 H419"/>
<path d="M408 238.4 H419"/>
<path d="M408 241.0 H419"/>
<path d="M408 243.6 H419"/>
<path d="M408 246.2 H419"/>
<path d="M408 248.8 H419"/>
<path d="M408 251.4 H419"/>
<path d="M408 254.0 H419"/>
<path d="M408 256.6 H419"/>
<path d="M408 259.2 H419"/>
<path d="M408 261.8 H419"/>
<path d="M408 264.4 H419"/>
<path d="M408 267.0 H419"/>
<path d="M408 269.6 H419"/>
<path d="M413.5 230 V262"/>
</g>
<g fill="#f2c21a"><rect x="356.4" y="204.5" width="1.2" height="1.5"/><rect x="354.5" y="207" width="5" height="1.6"/><rect x="356.2" y="207" width="1.6" height="4.5"/><rect x="353.2" y="210.5" width="7.6" height="1.8"/></g>
<g fill="#f2c21a"><rect x="350.28" y="289.6" width="1.44" height="1.7999999999999998"/><rect x="348.0" y="292.6" width="6.0" height="1.92"/><rect x="350.04" y="292.6" width="1.92" height="5.3999999999999995"/><rect x="346.44" y="296.8" width="9.12" height="2.16"/></g>
<g fill="#f2c21a"><rect x="441.4" y="259.5" width="1.2" height="1.5"/><rect x="439.5" y="262" width="5" height="1.6"/><rect x="441.2" y="262" width="1.6" height="4.5"/><rect x="438.2" y="265.5" width="7.6" height="1.8"/></g>
<g fill="#e8a020"><rect x="441.4" y="220.5" width="1.2" height="1.5"/><rect x="439.5" y="223" width="5" height="1.6"/><rect x="441.2" y="223" width="1.6" height="4.5"/><rect x="438.2" y="226.5" width="7.6" height="1.8"/></g>
<g fill="#e8b020"><rect x="395.52" y="192.4" width="0.96" height="1.2000000000000002"/><rect x="394.0" y="194.4" width="4.0" height="1.2800000000000002"/><rect x="395.36" y="194.4" width="1.2800000000000002" height="3.6"/><rect x="392.96" y="197.2" width="6.08" height="1.4400000000000002"/></g>
<path d="M350 252 H366" stroke="#7a6a30" stroke-width="0.8"/>
<g fill="#f2c21a"><rect x="359.52" y="247.4" width="0.96" height="1.2000000000000002"/><rect x="358.0" y="249.4" width="4.0" height="1.2800000000000002"/><rect x="359.36" y="249.4" width="1.2800000000000002" height="3.6"/><rect x="356.96" y="252.2" width="6.08" height="1.4400000000000002"/></g>
</svg>
<svg class="a" style="left:630px;top:122px" width="40" height="14">
<rect x="6" y="6" width="6.5" height="2.5" fill="#fff"/>
<rect x="19" y="4.5" width="5" height="4.5" fill="none" stroke="#fff" stroke-width="1.2"/>
<rect x="17" y="6.5" width="5" height="4" fill="#000" stroke="#fff" stroke-width="1.2"/>
<path d="M29.5 4 L35 9.5 M35 4 L29.5 9.5" stroke="#fff" stroke-width="1.8"/>
</svg>
<svg class="a" style="left:626px;top:130px" width="40" height="40">
<circle cx="20" cy="20.3" r="16.2" fill="#fff"/>
<circle cx="20" cy="20.3" r="14.4" fill="#4b84d8"/>
<rect x="12.5" y="13" width="8" height="8" fill="#fff"/>
<rect x="17" y="17.5" width="9" height="9" fill="#fff" stroke="#4b84d8" stroke-width="1"/>
<path d="M14.5 19.5 L16.5 14.5 L18.5 19.5" stroke="#4b84d8" stroke-width="1" fill="none"/>
<path d="M19.5 24.5 L21.5 19.5 L23.5 24.5" stroke="#4b84d8" stroke-width="1" fill="none"/>
<path d="M21.5 14.5 H26 M24 12.5 L26 14.5 L24 16.5" stroke="#fff" stroke-width="1.2" fill="none"/>
</svg>
<div class="a" style="left:670px;top:121.7px;width:11px;height:276.3px;background:#efefef;border-left:1px solid #fafafa"></div>
<div class="a" style="left:671px;top:226.4px;width:9.5px;height:12px;background:#cdcdcd"></div>
<svg class="a" style="left:670px;top:122px" width="11" height="276"><path d="M2.5 8.5 L5.5 5 L8.5 8.5" stroke="#333" stroke-width="1.1" fill="none"/><path d="M2.5 268 L5.5 271.5 L8.5 268" stroke="#333" stroke-width="1.1" fill="none"/></svg>
<div class="a" style="left:177.5px;top:398px;width:503.5px;height:14px;background:linear-gradient(#dde6f2,#d2ddec)"></div>
<svg class="a" style="left:178px;top:398px" width="60" height="14"><path d="M4 0 L8 12.5 H36 L40 0" fill="#cbd8e8" stroke="#95a3b6" stroke-width="0.9"/></svg>
<div class="a t" style="left:188px;top:398px;font-size:8.5px;line-height:12px;color:#1e2a3a;transform:scaleX(0.92);transform-origin:0 0">Model</div>
<div class="a t" style="left:228px;top:398px;font-size:8.5px;line-height:12px;color:#1e2a3a;transform:scaleX(0.92);transform-origin:0 0">Layout1</div>
<div class="a" style="left:486px;top:400px;width:12px;height:11.5px;background:linear-gradient(#dde8f5,#c3d5ec);border:1px solid #9eb0c6;border-radius:2px"></div>
<svg class="a" style="left:486px;top:400px" width="12" height="12"><path d="M3.5 5 C3.5 3.5 5.5 3.5 6 5 C6.5 3.5 8.5 3.5 8.5 5 C8.5 6.5 6 8.5 6 8.5 C6 8.5 3.5 6.5 3.5 5 Z" fill="none" stroke="#6a7a90" stroke-width="0.9"/></svg>
<svg class="a" style="left:500px;top:398px" width="3" height="14"><path d="M1 1 V13" stroke="#7a8898" stroke-width="1" stroke-dasharray="1 1"/></svg>
<div class="a" style="left:503px;top:398px;width:167px;height:13px;background:#ededed"></div>
<div class="a" style="left:558.8px;top:399px;width:11px;height:11px;background:#d2d2d2"></div>
<svg class="a" style="left:503px;top:398px" width="167" height="13"><path d="M8 3.5 L5 6.5 L8 9.5" stroke="#333" stroke-width="1.2" fill="none"/><path d="M159 3.5 L162 6.5 L159 9.5" stroke="#333" stroke-width="1.2" fill="none"/></svg>
<div class="a" style="left:670px;top:398px;width:11px;height:14px;background:#dfe8f3"></div>
<!--/CANVAS-->
<!--BOTTOM-->
<div class="a" style="left:2px;top:412px;width:679px;height:5px;background:#e9eef4;border-bottom:1px solid #a9a9a9"></div>
<div class="a" style="left:2px;top:417px;width:679px;height:10px;background:linear-gradient(#d6e6f9,#bcd6f4 60%,#c4daf5);border-bottom:1px solid #9aa6b4"></div>
<div class="a t" style="left:6.5px;top:415.8px;font-size:9px;line-height:12px;color:#1f4fa0;"><span class="c">命</span><span class="c">令</span><span class="c">行</span></div>
<svg class="a" style="left:669px;top:417px" width="10" height="10"><path d="M3 1.5 H7 V2.5 H6.5 V6 H7.5 V7 H2.5 V6 H3.5 V2.5 H3 Z" fill="#1a1a1a"/><path d="M5 7 V9.5" stroke="#1a1a1a" stroke-width="1"/></svg>
<div class="a" style="left:2px;top:428px;width:679px;height:40.5px;background:#fff;border-bottom:1.5px solid #8e8e8e"></div>
<svg class="a" style="left:670px;top:428px" width="11" height="40"><path d="M2.5 9 L5.5 6 L8.5 9" stroke="#c0c0c0" stroke-width="1" fill="none"/><path d="M2.5 32 L5.5 35 L8.5 32" stroke="#c0c0c0" stroke-width="1" fill="none"/></svg>
<div class="a t" style="left:4px;top:430.0px;font-size:9px;line-height:12px;color:#222;"><span class="c">替</span><span class="c">换</span></div>
<div class="a t" style="left:23.5px;top:430.0px;font-size:8.5px;line-height:12px;color:#111;transform:scaleX(0.965);transform-origin:0 0;">[AllInOneBig.shx]</div>
<div class="a t" style="left:88.5px;top:430.0px;font-size:9px;line-height:12px;color:#222;"><span class="c">字</span><span class="c">体</span><span class="c">为</span></div>
<div class="a t" style="left:116.5px;top:430.0px;font-size:8.5px;line-height:12px;color:#111;transform:scaleX(0.965);transform-origin:0 0;">[BIGFONT.SHX]</div>
<div class="a" style="left:2px;top:469.5px;width:679px;height:15px;background:#fff;border-bottom:1px solid #8c96a2"></div>
<div class="a" style="left:2px;top:469.5px;width:39.5px;height:14px;background:linear-gradient(#d2e4f8,#bcd5f2);border-right:1px solid #a8b6c6"></div>
<div class="a t" style="left:6.5px;top:470.8px;font-size:9px;line-height:12px;color:#222;"><span class="c">命</span><span class="c">令</span><span class="c">行</span>:</div>
<div class="a" style="left:2px;top:485px;width:679px;height:13px;background:linear-gradient(#e6edf6,#d5e0ee 50%,#cbd8ea)"></div>
<div class="a" style="left:168.3px;top:485.5px;width:1px;height:12px;background:#f6f9fc"></div>
<div class="a" style="left:167.3px;top:485.5px;width:1px;height:12px;background:#cad6e4"></div>
<div class="a" style="left:464px;top:485.5px;width:1px;height:12px;background:#f6f9fc"></div>
<div class="a" style="left:463px;top:485.5px;width:1px;height:12px;background:#cad6e4"></div>
<div class="a" style="left:553px;top:485.5px;width:1px;height:12px;background:#f6f9fc"></div>
<div class="a" style="left:552px;top:485.5px;width:1px;height:12px;background:#cad6e4"></div>
<div class="a t" style="left:6px;top:485.2px;font-size:9px;line-height:12px;color:#2a3446;"><span class="c">新</span><span class="c">块</span></div>
<div class="a t" style="left:24px;top:485.2px;font-size:9px;line-height:12px;color:#2a3446;transform:scaleX(0.88);transform-origin:0 0;">(1).dwg</div>
<div class="a t" style="left:172.5px;top:485.2px;font-size:8.5px;line-height:12px;color:#2a3446;transform:scaleX(0.9);transform-origin:0 0;">14/15</div>
<div class="a t" style="left:296.5px;top:485.2px;font-size:8.5px;line-height:12px;color:#2a3446;transform:scaleX(0.86);transform-origin:0 0;">(1029872; 408914.9; 6.942924E-51)</div>
<div class="a t" style="left:556.5px;top:485.2px;font-size:8.5px;line-height:12px;color:#2a3446;transform:scaleX(0.86);transform-origin:0 0;">15079.33 x 13749.38 x 1.33166E-6</div>
<svg class="a" style="left:236px;top:484px" width="60" height="14">
<path d="M5 11 C1 9 2 3 5.5 2.5 C9 2 11 5 10 8" stroke="#2a8a3a" stroke-width="2" fill="none"/>
<path d="M5 3 C7 3 9 5 8.5 8" stroke="#3060c0" stroke-width="1.2" fill="none"/>
<rect x="9" y="9.5" width="3" height="3" fill="#e02020"/>
<g fill="#6a6a6a"><rect x="16.5" y="2.5" width="1.6" height="1.6" fill="#6a6a6a"/><rect x="20" y="2.5" width="1.6" height="1.6" fill="#6a6a6a"/><rect x="23.5" y="2.5" width="1.6" height="1.6" fill="#c03030"/><rect x="16.5" y="6" width="1.6" height="1.6" fill="#6a6a6a"/><rect x="20" y="6" width="1.6" height="1.6" fill="#6a6a6a"/><rect x="23.5" y="6" width="1.6" height="1.6" fill="#6a6a6a"/><rect x="16.5" y="9.5" width="1.6" height="1.6" fill="#c03030"/><rect x="20" y="9.5" width="1.6" height="1.6" fill="#6a6a6a"/><rect x="23.5" y="9.5" width="1.6" height="1.6" fill="#c03030"/></g>
<path d="M37 2 V12 M31.5 12 H42.5" stroke="#4a6a9a" stroke-width="1.1"/>
<path d="M48 8 L50.5 11 L55 5" stroke="#2a9a3a" stroke-width="2" fill="none"/>
<path d="M51 7 L56 2" stroke="#333" stroke-width="1.2"/>
</svg>
<div class="a" style="left:2px;top:498px;width:679px;height:2px;background:#2a2a2a"></div>
<!--/BOTTOM-->
</body></html>
